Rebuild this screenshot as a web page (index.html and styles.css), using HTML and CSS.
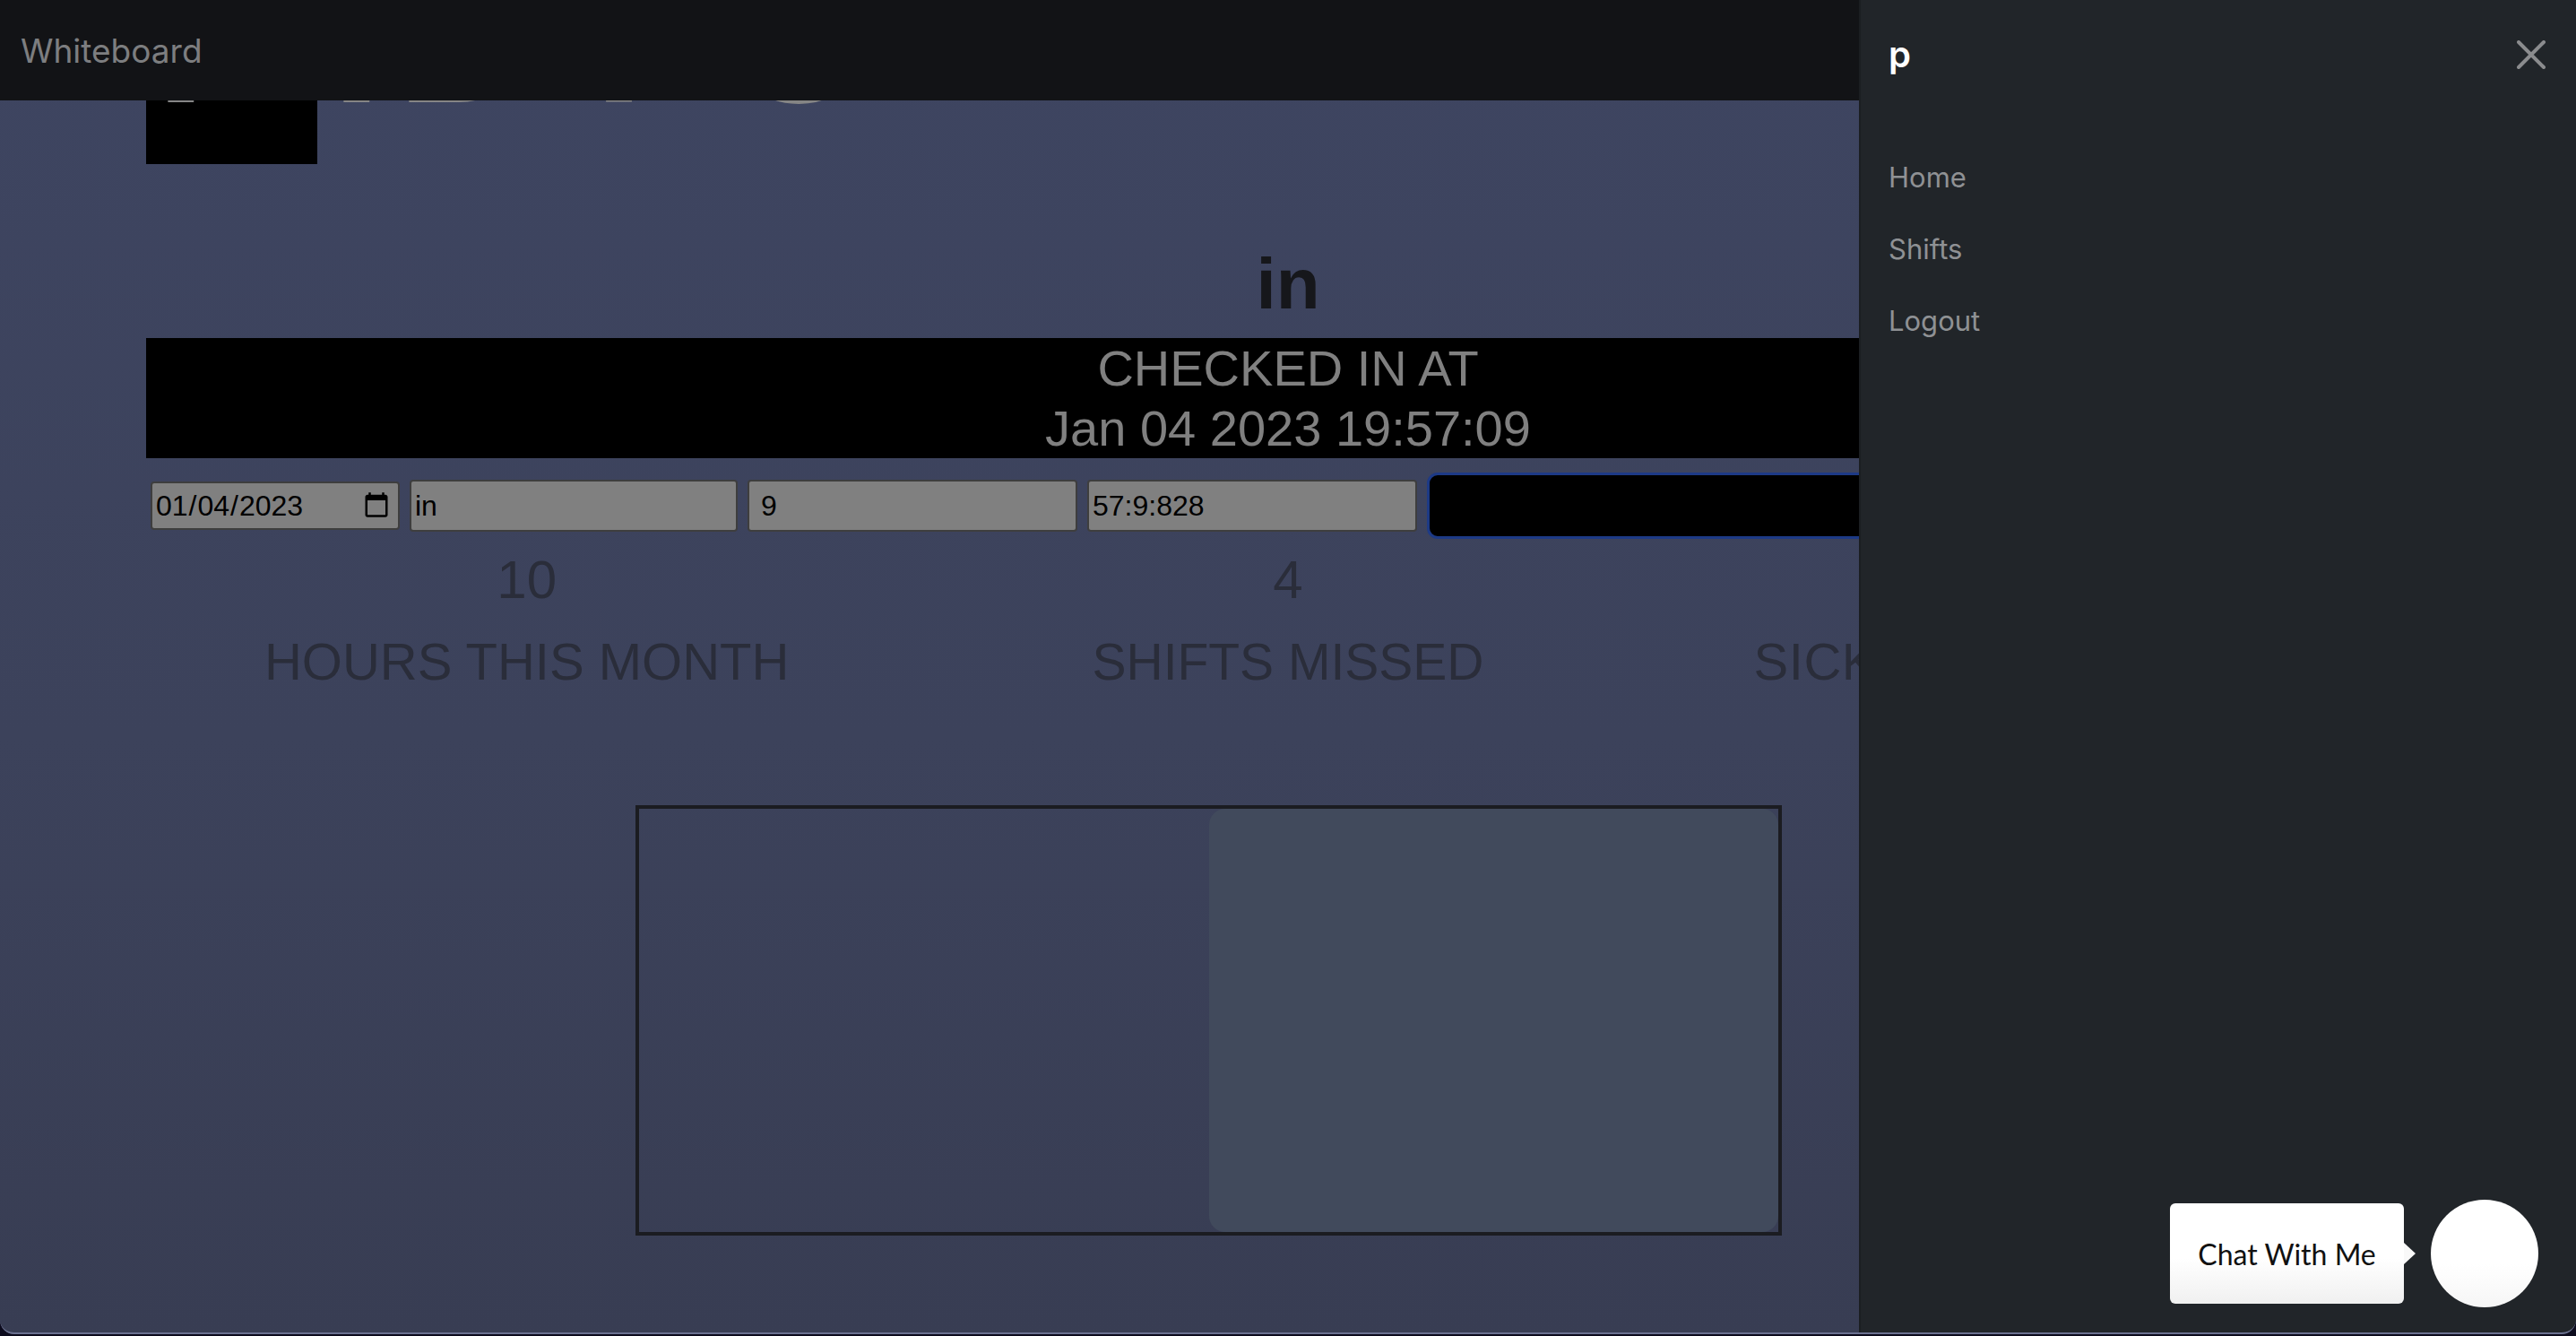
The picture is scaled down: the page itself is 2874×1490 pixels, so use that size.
FILE: index.html
```html
<!DOCTYPE html>
<html lang="en">
<head>
<meta charset="utf-8">
<title>Whiteboard</title>
<link rel="stylesheet" href="styles.css">
</head>
<body>
<nav class="topbar"><span class="brand">Whiteboard</span></nav>

<main class="page">
  <section class="hero">
    <div class="avatar"></div>
    <h1 class="hero-title">I&nbsp;&nbsp;ID&#8201;PO</h1>
  </section>

  <h1 class="status">in</h1>

  <div class="checked">
    <p>CHECKED IN AT</p>
    <p>Jan 04 2023 19:57:09</p>
  </div>

  <form class="entry">
    <input type="date" class="field field-date" value="2023-01-04">
    <input type="text" class="field field-in" value="in">
    <input type="text" class="field field-num" value="9">
    <input type="text" class="field field-time" value="57:9:828">
    <button type="button" class="submit"></button>
  </form>

  <div class="stats">
    <div class="stat">
      <div class="stat-num">10</div>
      <div class="stat-label">HOURS THIS MONTH</div>
    </div>
    <div class="stat">
      <div class="stat-num">4</div>
      <div class="stat-label">SHIFTS MISSED</div>
    </div>
    <div class="stat">
      <div class="stat-num">2</div>
      <div class="stat-label">SICK DAYS REMAINING</div>
    </div>
  </div>

  <div class="chart">
    <div class="chart-left"></div>
    <div class="chart-right"></div>
  </div>
</main>

<aside class="offcanvas">
  <header class="oc-header">
    <h5 class="oc-title">p</h5>
    <button type="button" class="oc-close" aria-label="Close">
      <svg viewBox="0 0 32 32"><path d="M2 2 L30 30 M30 2 L2 30" stroke="#8b8c8e" stroke-width="4" stroke-linecap="round" fill="none"/></svg>
    </button>
  </header>
  <ul class="oc-nav">
    <li><a href="#">Home</a></li>
    <li><a href="#">Shifts</a></li>
    <li><a href="#">Logout</a></li>
  </ul>
</aside>

<div class="chat">
  <div class="chat-bubble">Chat With Me</div>
  <div class="chat-avatar"></div>
</div>

<div class="frame"></div>
</body>
</html>
```

FILE: styles.css
```css
* { box-sizing: border-box; }

html, body {
  margin: 0;
  height: 100%;
}

body {
  background: linear-gradient(180deg, #3e4561 0%, #3c425b 55%, #383d53 100%);
  font-family: "Liberation Sans", Arial, sans-serif;
  overflow: hidden;
}

/* top navbar */
.topbar {
  position: fixed;
  top: 0;
  left: 0;
  right: 0;
  height: 112px;
  background: #121316;
  display: flex;
  align-items: center;
  padding-left: 23px;
  z-index: 10;
}

.brand {
  font-family: Inter, "Liberation Sans", sans-serif;
  font-size: 37px;
  color: #7d7e80;
}

/* main content */
.page {
  padding: 0 163px;
}

.hero {
  display: grid;
  height: 183px;
}

.avatar {
  grid-area: 1 / 1;
  width: 191px;
  height: 183px;
  background: #000;
}

.hero-title {
  grid-area: 1 / 1;
  margin: 0;
  padding-left: 11px;
  height: 90px;
  font-size: 200px;
  line-height: 90px;
  font-weight: 700;
  color: #858585;
  letter-spacing: 17.6px;
  word-spacing: -11.8px;
  white-space: nowrap;
}

.status {
  margin: 86px 0 0;
  text-align: center;
  font-size: 80px;
  line-height: 96px;
  font-weight: 700;
  color: #16171b;
}

.checked {
  margin-top: 12px;
  background: #000;
  text-align: center;
  color: #808080;
  font-size: 56px;
  line-height: 67px;
}

.checked p {
  margin: 0;
}

.entry {
  display: flex;
  align-items: center;
  gap: 11px;
  margin: 16px 0 0;
  padding: 0 5px;
  height: 74px;
}

.field {
  height: 58px;
  margin: 0;
  border: 2px solid #3e3e3e;
  border-radius: 4px;
  background: #808080;
  color: #000;
  font: 32px "Liberation Sans", Arial, sans-serif;
  padding: 0 4px;
  outline: none;
}

.field-date {
  width: 278px;
  height: 54px;
  padding: 0 6px 0 3px;
}

.field-in { width: 366px; }
.field-num { width: 368px; padding-left: 13px; }
.field-time { width: 368px; }

.submit {
  flex: 1;
  height: 74px;
  margin: 0;
  background: #000;
  border: 3px solid #1d3a86;
  border-radius: 12px;
}

.stats {
  display: grid;
  grid-template-columns: 1fr 1fr 1fr;
  margin-top: 10px;
  color: #2a2d3a;
  text-align: center;
}

.stat-num {
  font-size: 60px;
  line-height: 72px;
}

.stat-label {
  margin-top: 20px;
  font-size: 58px;
  line-height: 70px;
  white-space: nowrap;
}

.stat:nth-child(2) .stat-label {
  font-size: 57px;
}

.stat:nth-child(3) .stat-label {
  letter-spacing: 0.5px;
}

.chart {
  display: grid;
  grid-template-columns: 1fr 1fr;
  margin: 125px 0 0 546px;
  width: 1279px;
  height: 480px;
  border: 4px solid #1b1c21;
}

.chart-right {
  background: #414a5c;
  border-radius: 18px;
}

/* offcanvas sidebar */
.offcanvas {
  position: fixed;
  top: 0;
  right: 0;
  bottom: 0;
  width: 800px;
  background: #212529;
  border-left: 2px solid #1b1e21;
  z-index: 20;
  font-family: Inter, "Liberation Sans", sans-serif;
}

.oc-header {
  display: flex;
  align-items: center;
  justify-content: space-between;
  padding: 37px 26px 36px 31px;
}

.oc-title {
  margin: 0;
  font-size: 40px;
  line-height: 48px;
  font-weight: 600;
  color: #fff;
}

.oc-close {
  width: 48px;
  height: 48px;
  padding: 8px;
  border: 0;
  background: none;
}

.oc-close svg {
  display: block;
  width: 32px;
  height: 32px;
}

.oc-nav {
  list-style: none;
  margin: 0;
  padding: 37px 31px 0;
}

.oc-nav a {
  display: block;
  padding: 16px 0;
  font-size: 31px;
  line-height: 48px;
  color: #8f9194;
  text-decoration: none;
}

/* chat widget */
.chat {
  position: fixed;
  right: 42px;
  bottom: 32px;
  display: flex;
  align-items: center;
  z-index: 30;
}

.chat-bubble {
  position: relative;
  width: 261px;
  height: 112px;
  margin-right: 30px;
  border-radius: 6px;
  background: linear-gradient(180deg, #ffffff 55%, #f0f0f0 100%);
  display: flex;
  align-items: center;
  justify-content: center;
  font-family: Lato, "Liberation Sans", sans-serif;
  font-size: 32px;
  color: #111;
}

.chat-bubble::after {
  content: "";
  position: absolute;
  left: 100%;
  top: 50%;
  margin-top: -12px;
  border-left: 13px solid #f9f9f9;
  border-top: 12px solid transparent;
  border-bottom: 12px solid transparent;
}

.chat-avatar {
  width: 120px;
  height: 120px;
  border-radius: 50%;
  background: linear-gradient(180deg, #ffffff 60%, #f6f6f6 100%);
}

/* window frame */
.frame {
  position: fixed;
  top: 0;
  left: 0;
  right: 0;
  height: 1488px;
  border-bottom: 2px solid #6b7190;
  border-radius: 0 0 16px 16px;
  box-shadow: 0 0 0 40px #0c0b1d;
  pointer-events: none;
  z-index: 50;
}
```
